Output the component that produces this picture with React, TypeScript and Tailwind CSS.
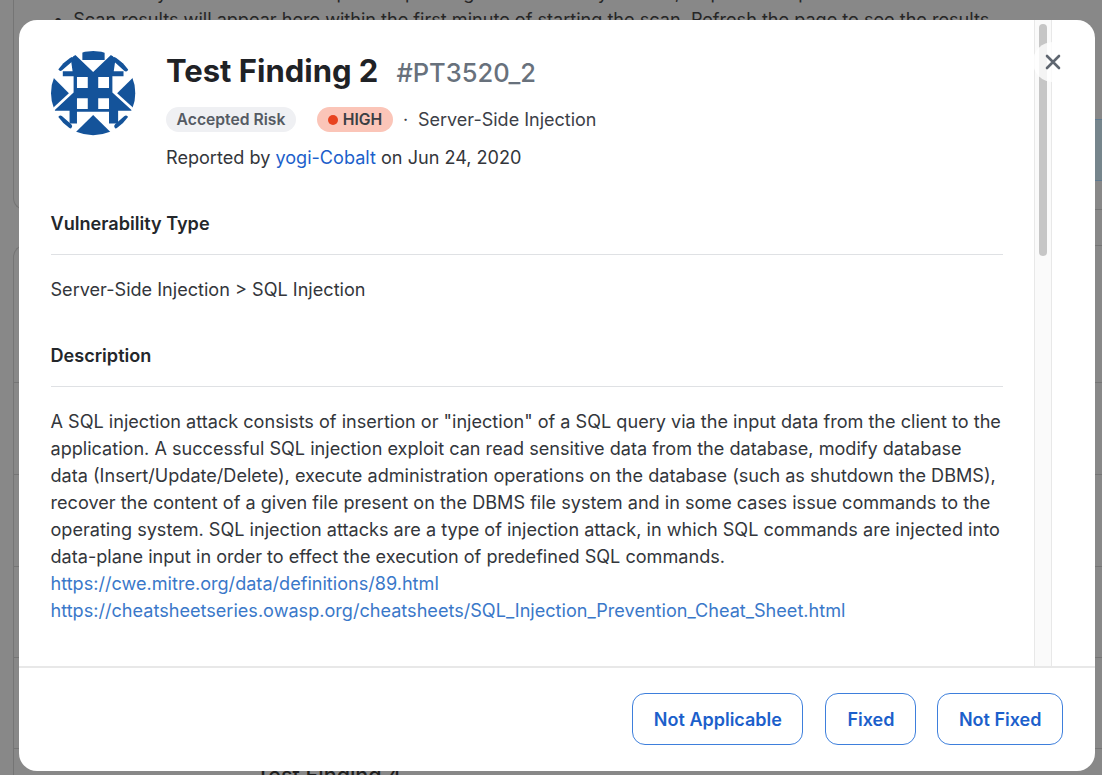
import React from "react";

const FONT = "[font-family:Inter,'Noto_Sans',sans-serif]";

function Avatar() {
  return (
    <svg width="85" height="85" viewBox="63 35 252 252" className="shrink-0">
      <defs>
        <clipPath id="avatar-clip">
          <circle cx="188" cy="160" r="125" />
        </clipPath>
      </defs>
      <g clipPath="url(#avatar-clip)" fill="#14539a">
        <path d="M156 30H222V62H156Z" />
        <path d="M133 45L188 97L243 45L254 60L249 95H278V110H245V158L304 212H262V250H235V215H140V250H118V212H72L130 158V110H98V95H127L122 60Z" />
        <path d="M62 106L116 160L62 210Z" />
        <path d="M314 106L259 160L314 210Z" />
        <path d="M188 225L130 282V290H246V282Z" />
        <path d="M91 86L122 60" stroke="#14539a" strokeWidth="15" strokeLinecap="round" />
        <path d="M254 60L285 88" stroke="#14539a" strokeWidth="15" strokeLinecap="round" />
        <path d="M91 234L118 258" stroke="#14539a" strokeWidth="15" strokeLinecap="round" />
        <path d="M258 258L285 234" stroke="#14539a" strokeWidth="15" strokeLinecap="round" />
        <path d="M140 112H172V145H140Z" fill="#ffffff" />
        <path d="M203 112H235V145H203Z" fill="#ffffff" />
        <path d="M140 175H172V207H140Z" fill="#ffffff" />
        <path d="M203 175H235V207H203Z" fill="#ffffff" />
      </g>
    </svg>
  );
}

function BackgroundPage() {
  return (
    <div className="h-full overflow-hidden bg-[#888888]">
      <div className="relative ml-[13px] -mr-[20px] h-[210px] overflow-hidden rounded-bl-[12px] border-b border-l border-[#757575]">
        <p className="-mt-[21px] h-[27px] whitespace-nowrap pl-[60px] text-[18px] leading-[27px] text-[#262626]">
          Scans may take a while to complete depending on the assets you have, so please be patient
        </p>
        <p className="ml-[39px] whitespace-nowrap text-[18.1px] leading-[27px] text-[#262626]">
          •<span className="ml-[10px]">Scan results will appear here within the first minute of starting the scan. Refresh the page to see the results</span>
        </p>
        <div className="ml-auto mt-[86px] h-[62px] w-[300px] border-y border-[#5f7a90] bg-[#76858c]" />
      </div>
      <div className="ml-[13px] -mr-[20px] mt-[35px] overflow-hidden rounded-tl-[12px] border-l border-t border-[#757575]">
        <div className="h-[137px] border-b border-[#757575]" />
        <div className="h-[92px] border-b border-[#757575]" />
        <div className="h-[92px] border-b border-[#757575]" />
        <div className="h-[91px] border-b border-[#757575]" />
        <div className="h-[91px] border-b border-[#757575]" />
        <div className="pl-[242px] pt-[14px] text-[21.5px] font-medium leading-[24px] text-[#1e1e1e]">Test Finding 4</div>
      </div>
    </div>
  );
}

function Section({ title, children }: { title: string; children: React.ReactNode }) {
  return (
    <section>
      <h2 className="border-b border-[#dfe1e4] pb-[19px] text-[18.1px] font-semibold leading-[24px] text-[#24272b]">{title}</h2>
      <div className="pt-[21px] text-[18.1px] leading-[27px] text-[#33363b]">{children}</div>
    </section>
  );
}

function FooterButton({ label, className }: { label: string; className?: string }) {
  return (
    <button className={`flex h-[52px] items-center justify-center rounded-[13px] border-[1.5px] border-[#3e7fdc] bg-white px-[20.5px] text-[18px] font-semibold text-[#1c5fcb] ${className ?? ""}`}>
      {label}
    </button>
  );
}

export default function App() {
  return (
    <div className={`relative h-[775px] w-[1102px] overflow-hidden ${FONT}`}>
      <BackgroundPage />
      <div className="absolute left-[19px] top-[20px] flex h-[751px] w-[1076px] flex-col overflow-hidden rounded-[18px] bg-white">
        <div className="flex min-h-0 flex-1">
          <div className="min-w-0 flex-1 overflow-hidden pl-[31.5px] pr-[31px] pt-[31px]">
            <header className="flex gap-[30.5px]">
              <Avatar />
              <div className="min-w-0">
                <div className="flex items-baseline gap-[18px] pt-[1px]">
                  <h1 className="text-[31px] font-bold leading-[38px] text-[#1f2226]">Test Finding 2</h1>
                  <span className="text-[25.5px] font-medium leading-[38px] text-[#68717c]">#PT3520_2</span>
                </div>
                <div className="mt-[14px] flex items-center text-[18px] text-[#3c4047]">
                  <span className="flex h-[25px] w-[130px] items-center justify-center rounded-full bg-[#eff0f3] text-[15.7px] font-semibold text-[#555b63]">Accepted Risk</span>
                  <span className="ml-[21px] flex h-[25px] w-[76px] items-center justify-center gap-[5px] rounded-full bg-[#fbc5b8] text-[15.7px] font-semibold text-[#3c3f44]">
                    <span className="h-[10px] w-[10px] rounded-full bg-[#e8431f]" />
                    HIGH
                  </span>
                  <span className="ml-[10px] w-[15px]">·</span>
                  <span>Server-Side Injection</span>
                </div>
                <p className="mt-[11px] text-[18.1px] leading-[27px] text-[#33363b]">
                  Reported by <span className="text-[#1c5fcb]">yogi-Cobalt</span> on Jun 24, 2020
                </p>
              </div>
            </header>
            <div className="mt-[40px] flex flex-col gap-[40px]">
              <Section title="Vulnerability Type">Server-Side Injection &gt; SQL Injection</Section>
              <Section title="Description">
                <p className="w-[953px]">
                  A SQL injection attack consists of insertion or "injection" of a SQL query via the input data from the client to the application. A successful SQL injection exploit can read sensitive data from the database, modify database data (Insert/Update/Delete), execute administration operations on the database (such as shutdown the DBMS), recover the content of a given file present on the DBMS file system and in some cases issue commands to the operating system. SQL injection attacks are a type of injection attack, in which SQL commands are injected into data-plane input in order to effect the execution of predefined SQL commands.
                </p>
                <p className="text-[#3a78c9]">https://cwe.mitre.org/data/definitions/89.html</p>
                <p className="text-[#3a78c9]">https://cheatsheetseries.owasp.org/cheatsheets/SQL_Injection_Prevention_Cheat_Sheet.html</p>
              </Section>
            </div>
          </div>
          <div className="mr-[43px] w-[18px] shrink-0 border-x border-[#e8e8e8] bg-[#fafafa] px-[4px] pt-[4px]">
            <div className="h-[232px] w-full rounded-full bg-[#c6c6c6]" />
          </div>
        </div>
        <footer className="flex h-[105px] shrink-0 items-center justify-end gap-[21px] border-t-2 border-[#e8e8e8] pb-[1px] pr-[32px]">
          <FooterButton label="Not Applicable" className="mr-[1px]" />
          <FooterButton label="Fixed" className="w-[91px]" />
          <FooterButton label="Not Fixed" />
        </footer>
        <button className="absolute left-[1014px] top-[22px] flex h-[40px] w-[40px] items-center justify-center rounded-full bg-white/80 text-[#5f6670]">
          <svg width="18" height="18" viewBox="0 0 18 18" fill="none" stroke="currentColor" strokeWidth="2.6" strokeLinecap="round">
            <path d="M3 3L15 15M15 3L3 15" />
          </svg>
        </button>
      </div>
    </div>
  );
}
